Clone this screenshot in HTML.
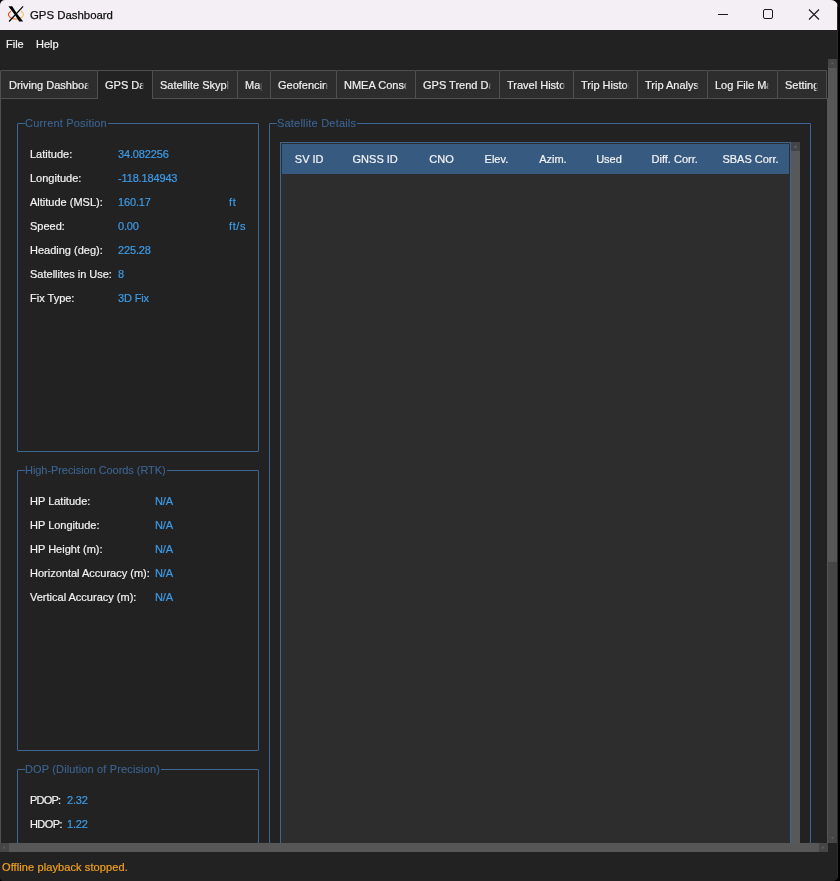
<!DOCTYPE html>
<html><head><meta charset="utf-8">
<style>
html,body{margin:0;padding:0;}
body{width:840px;height:881px;overflow:hidden;background:#000;position:relative;font-family:"Liberation Sans",sans-serif;}
.a{position:absolute;}
.t{position:absolute;font-size:11px;line-height:11px;white-space:nowrap;-webkit-text-stroke:0.2px currentColor;}
#win{will-change:transform;position:absolute;left:0;top:0;width:838px;height:881px;background:#222222;border-radius:5px 7px 5px 4px;overflow:hidden;}
#title{position:absolute;left:0;top:0;width:838px;height:30px;background:#f3eff4;}
.lab{color:#f2f2f2;}
.val{color:#3d9be6;letter-spacing:-0.15px;}
.gb{position:absolute;border:1px solid #3c6795;border-radius:1px;}
.gt{position:absolute;color:#3c6593;background:#222222;font-size:11px;line-height:11px;white-space:nowrap;padding:0 1px 0 0;-webkit-text-stroke:0.1px currentColor;}
.tab{position:absolute;top:70px;height:29px;border-radius:1px 1px 0 0;background:#2d2d2d;border:1px solid #4f4f4f;box-sizing:border-box;overflow:hidden;}
.tab span{position:absolute;top:9px;left:7px;right:8px;overflow:hidden;font-size:11px;line-height:11px;color:#f0f0f0;white-space:nowrap;-webkit-text-stroke:0.2px currentColor;-webkit-mask-image:linear-gradient(to left,transparent 0,#000 3px);}
.tab span.nf{-webkit-mask-image:none;}
.th{position:absolute;top:154px;width:100px;text-align:center;font-size:11px;line-height:11px;color:#f4f4f4;white-space:nowrap;-webkit-text-stroke:0.2px currentColor;}
</style></head><body>
<div id="win">
  <div id="title">
    <svg class="a" style="left:0;top:0" width="30" height="30" viewBox="0 0 30 30">
      <defs><linearGradient id="og" x1="0" x2="1" y1="0" y2="0"><stop offset="0" stop-color="#e84a14"/><stop offset="0.5" stop-color="#f08a30"/><stop offset="1" stop-color="#f2c860"/></linearGradient></defs>
      <path d="M11 11.2 A7.6 4.5 0 1 0 21 11.2" fill="none" stroke="url(#og)" stroke-width="1.2"/>
      <path d="M8.4 6.2 L12.2 6.2 L16.9 13.4 L23.2 21.6 L19.2 21.6 L14.6 14.4 Z" fill="#000"/>
      <path d="M23.1 6.3 L9.1 21.5" stroke="#000" stroke-width="1.2"/>
    </svg>
    <div class="t" style="left:30px;top:10px;font-size:11.4px;color:#101010;-webkit-text-stroke:0.25px #101010">GPS Dashboard</div>
    <div class="a" style="left:718px;top:14px;width:10px;height:1px;background:#1a1a1a"></div>
    <div class="a" style="left:763px;top:9px;width:8px;height:8px;border:1px solid #1a1a1a;border-radius:2px"></div>
    <svg class="a" style="left:808px;top:9px" width="12" height="11" viewBox="0 0 12 11"><path d="M1 0.5 L11 10.5 M11 0.5 L1 10.5" stroke="#1a1a1a" stroke-width="1.1"/></svg>
  </div>
  <!-- menu -->
  <div class="t lab" style="left:6px;top:38.5px">File</div>
  <div class="t lab" style="left:36px;top:38.5px">Help</div>

  <!-- tabs -->
  <div class="tab" style="left:0px;width:98px"><span style="left:8px">Driving Dashboard</span></div>
  <div class="tab" style="left:97px;width:56px;background:#222222;border-bottom:none;height:29px"><span>GPS Data</span></div>
  <div class="tab" style="left:152px;width:86px"><span>Satellite Skyplot</span></div>
  <div class="tab" style="left:237px;width:34px"><span>Map</span></div>
  <div class="tab" style="left:270px;width:67px"><span>Geofencing</span></div>
  <div class="tab" style="left:336px;width:80px"><span>NMEA Console</span></div>
  <div class="tab" style="left:415px;width:85px"><span>GPS Trend Data</span></div>
  <div class="tab" style="left:499px;width:75px"><span>Travel History</span></div>
  <div class="tab" style="left:573px;width:65px"><span>Trip History</span></div>
  <div class="tab" style="left:637px;width:71px"><span>Trip Analysis</span></div>
  <div class="tab" style="left:707px;width:71px"><span>Log File Manager</span></div>
  <div class="tab" style="left:777px;width:50px"><span>Settings</span></div>

  <!-- pane left border -->
  <div class="a" style="left:0;top:98px;width:1px;height:745px;background:#4f4f4f"></div>
  <div class="a" style="left:1px;top:98px;width:96px;height:1px;background:#4f4f4f"></div>
  <div class="a" style="left:152px;top:98px;width:675px;height:1px;background:#4f4f4f"></div>

  <!-- Current Position -->
  <div class="gb" style="left:17px;top:123px;width:240px;height:327px"></div>
  <div class="gt" style="left:25px;top:117.5px;letter-spacing:0.19px">Current Position</div>
  <div class="t lab" style="left:30px;top:148.5px">Latitude:</div>
  <div class="t val" style="left:118px;top:148.5px">34.082256</div>
  <div class="t lab" style="left:30px;top:172.5px">Longitude:</div>
  <div class="t val" style="left:118px;top:172.5px">-118.184943</div>
  <div class="t lab" style="left:30px;top:196.5px">Altitude (MSL):</div>
  <div class="t val" style="left:118px;top:196.5px">160.17</div>
  <div class="t val" style="left:229px;top:196.5px;letter-spacing:0.7px">ft</div>
  <div class="t lab" style="left:30px;top:220.5px">Speed:</div>
  <div class="t val" style="left:118px;top:220.5px">0.00</div>
  <div class="t val" style="left:229px;top:220.5px;letter-spacing:0.6px">ft/s</div>
  <div class="t lab" style="left:30px;top:244.5px">Heading (deg):</div>
  <div class="t val" style="left:118px;top:244.5px">225.28</div>
  <div class="t lab" style="left:30px;top:268.5px">Satellites in Use:</div>
  <div class="t val" style="left:118px;top:268.5px">8</div>
  <div class="t lab" style="left:30px;top:292.5px">Fix Type:</div>
  <div class="t val" style="left:118px;top:292.5px">3D Fix</div>

  <!-- HP -->
  <div class="gb" style="left:17px;top:470px;width:240px;height:279px"></div>
  <div class="gt" style="left:25px;top:464.5px;letter-spacing:-0.06px">High-Precision Coords (RTK)</div>
  <div class="t lab" style="left:30px;top:495.5px">HP Latitude:</div>
  <div class="t val" style="left:155px;top:495.5px">N/A</div>
  <div class="t lab" style="left:30px;top:519.5px">HP Longitude:</div>
  <div class="t val" style="left:155px;top:519.5px">N/A</div>
  <div class="t lab" style="left:30px;top:543.5px">HP Height (m):</div>
  <div class="t val" style="left:155px;top:543.5px">N/A</div>
  <div class="t lab" style="left:30px;top:567.5px">Horizontal Accuracy (m):</div>
  <div class="t val" style="left:155px;top:567.5px">N/A</div>
  <div class="t lab" style="left:30px;top:591.5px">Vertical Accuracy (m):</div>
  <div class="t val" style="left:155px;top:591.5px">N/A</div>

  <!-- DOP -->
  <div class="gb" style="left:17px;top:769px;width:240px;height:200px"></div>
  <div class="gt" style="left:25px;top:763.5px;letter-spacing:0.14px">DOP (Dilution of Precision)</div>
  <div class="t lab" style="left:30px;top:794.5px;letter-spacing:-0.8px">PDOP:</div>
  <div class="t val" style="left:67px;top:794.5px">2.32</div>
  <div class="t lab" style="left:30px;top:818.5px;letter-spacing:-0.6px">HDOP:</div>
  <div class="t val" style="left:67px;top:818.5px">1.22</div>

  <!-- Satellite details -->
  <div class="gb" style="left:269px;top:123px;width:540px;height:800px"></div>
  <div class="gt" style="left:277px;top:117.5px;letter-spacing:0.2px">Satellite Details</div>
  <div class="a" style="left:280px;top:142px;width:511px;height:760px;background:#2d2d2d;border:1px solid #3c6795;box-sizing:border-box"></div>
  <div class="a" style="left:282px;top:144px;width:507px;height:30px;background:#375a80"></div>
  <div class="th" style="left:259.2px">SV ID</div>
  <div class="th" style="left:325.2px">GNSS ID</div>
  <div class="th" style="left:391.6px">CNO</div>
  <div class="th" style="left:446.4px">Elev.</div>
  <div class="th" style="left:502.9px">Azim.</div>
  <div class="th" style="left:559.0px">Used</div>
  <div class="th" style="left:624.7px">Diff. Corr.</div>
  <div class="th" style="left:700.5px">SBAS Corr.</div>
  <!-- table vscroll -->
  <div class="a" style="left:791px;top:142px;width:9px;height:760px;background:#585858"></div>
  <div class="a" style="left:791px;top:142px;width:9px;height:9px;background:#444444"></div>
  <svg class="a" style="left:791px;top:142px" width="9" height="9"><path d="M4.5 3 L2.5 6 L6.5 6 Z" fill="#5c5c5c"/></svg>

  <!-- outer scrollbars -->
  <div class="a" style="left:0;top:843px;width:828px;height:9px;background:#464646"></div>
  <div class="a" style="left:9px;top:843px;width:810px;height:9px;background:#575757"></div>
  <svg class="a" style="left:0;top:843px" width="9" height="9"><path d="M3 4.5 L5.2 2.8 L5.2 6.2 Z" fill="#5c5c5c"/></svg>
  <svg class="a" style="left:819px;top:843px" width="9" height="9"><path d="M5.2 4.5 L3 2.8 L3 6.2 Z" fill="#5c5c5c"/></svg>
  <div class="a" style="left:828px;top:59px;width:9px;height:784px;background:#464646"></div>
  <div class="a" style="left:827px;top:98px;width:1px;height:745px;background:#555555"></div>
  <div class="a" style="left:828px;top:68px;width:9px;height:494px;background:#575757"></div>
  <svg class="a" style="left:828px;top:59px" width="9" height="9"><path d="M4.5 3 L2.8 5.2 L6.2 5.2 Z" fill="#5c5c5c"/></svg>
  <svg class="a" style="left:828px;top:834px" width="9" height="9"><path d="M4.5 5.2 L2.8 3 L6.2 3 Z" fill="#5c5c5c"/></svg>
  <div class="a" style="left:828px;top:843px;width:9px;height:9px;background:#222222"></div>
  <div class="a" style="left:837px;top:0;width:1px;height:881px;background:#2a2a2a"></div>
  <div class="a" style="left:0;top:852px;width:837px;height:29px;background:#222222"></div>

  <div class="t" style="left:2px;top:861.5px;color:#f2a11f;letter-spacing:0.1px">Offline playback stopped.</div>
</div>
</body></html>
